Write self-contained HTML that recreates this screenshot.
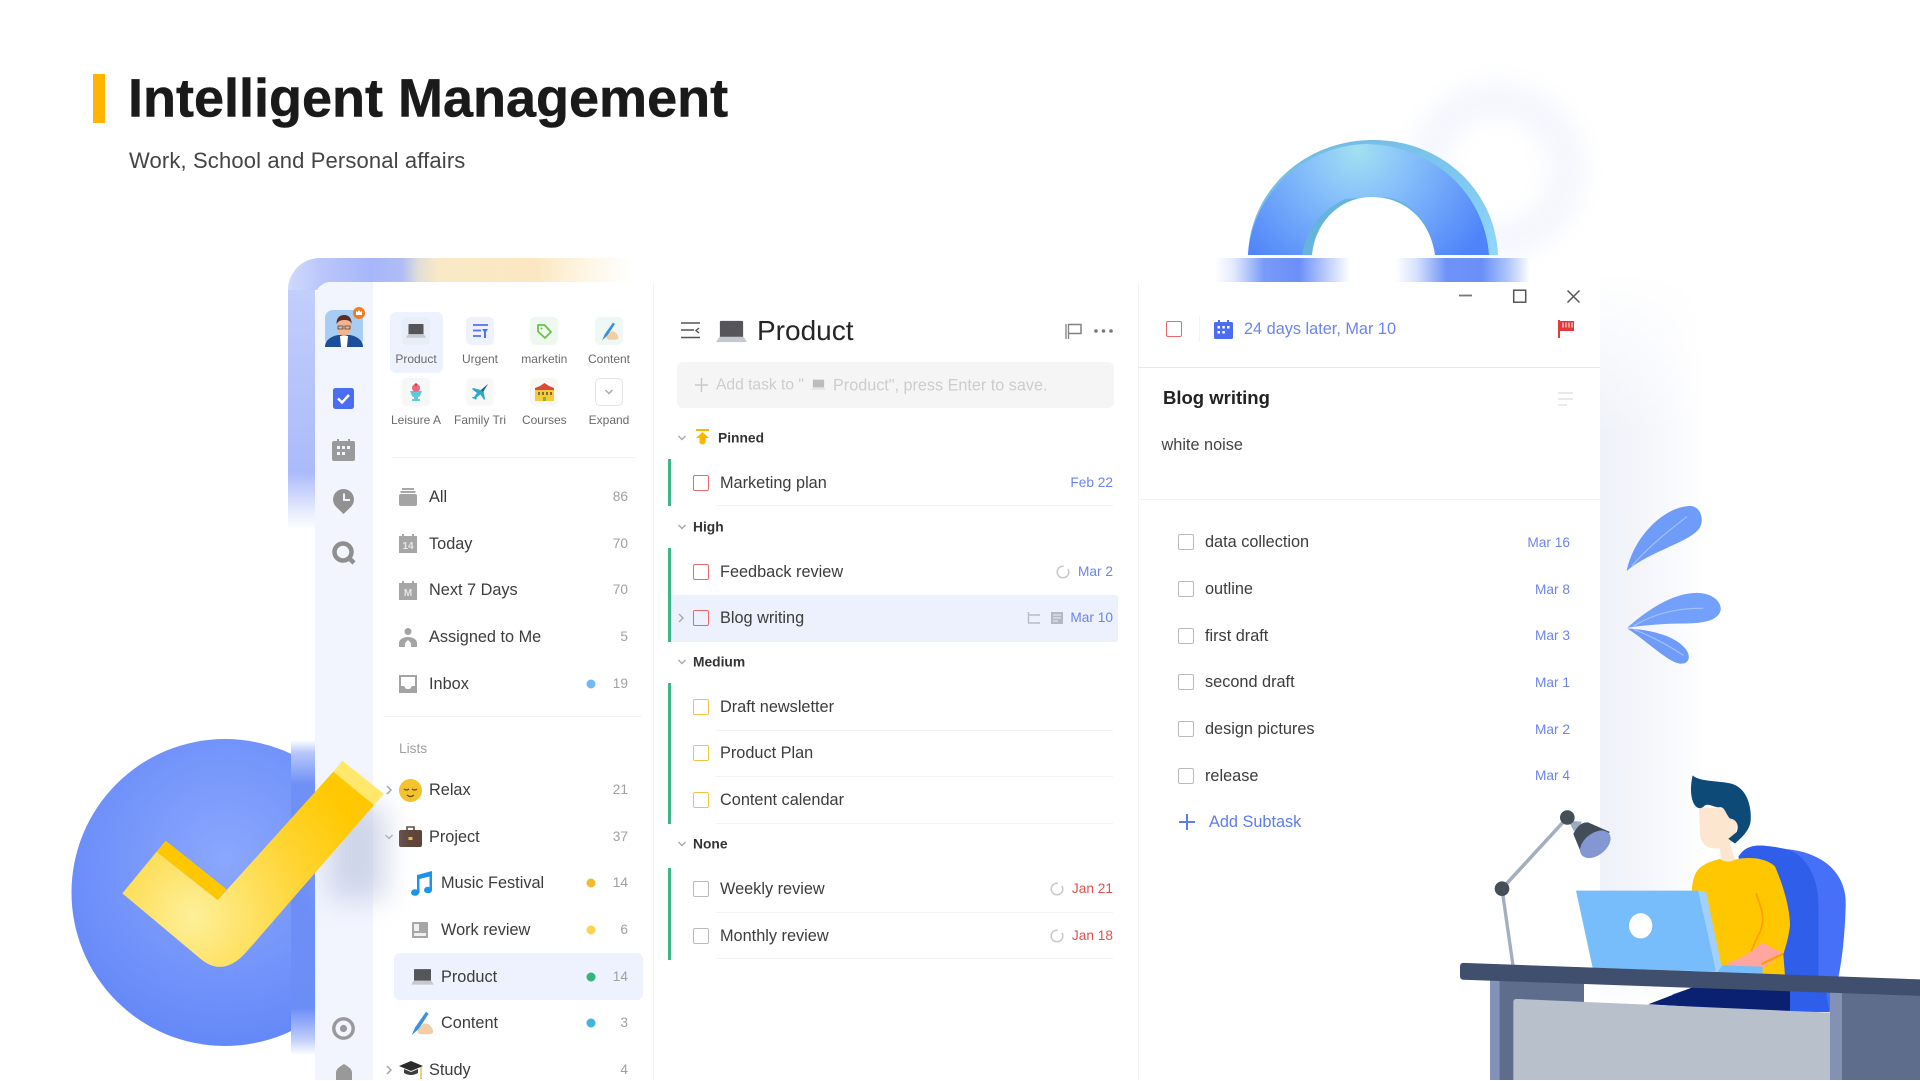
<!DOCTYPE html>
<html lang="en"><head><meta charset="utf-8"><title>Intelligent Management</title>
<style>
html,body{margin:0;padding:0;background:#fff}
body{width:1920px;height:1080px;overflow:hidden;position:relative;font-family:"Liberation Sans",sans-serif}
.a{position:absolute}
.t{position:absolute;white-space:nowrap;line-height:1.2;transform:translateY(calc(-50% + 1px));color:#3c3c3c;font-size:16.3px}
.c{position:absolute;white-space:nowrap;line-height:1.2;transform:translateY(-50%);color:#a0a0a0;font-size:13.7px;text-align:right}
.l{position:absolute;white-space:nowrap;line-height:1.2;transform:translate(-50%,-50%);color:#6a6a6a;font-size:12px}
.h{position:absolute;white-space:nowrap;line-height:1.2;transform:translateY(calc(-50% + 1px));color:#333;font-size:13.8px;font-weight:700}
.d{position:absolute;white-space:nowrap;line-height:1.2;transform:translateY(-50%);color:#6b84ee;font-size:13.7px;text-align:right}
.dot{position:absolute;width:9px;height:9px;border-radius:50%;transform:translate(-50%,-50%)}
.cb{position:absolute;width:14px;height:14px;border:1.8px solid #e8696b;border-radius:2px;transform:translateY(-50%)}
.y{border-color:#f0c544}.g{border-color:#b9b9b9}
.sep{position:absolute;height:1px;background:#f3f3f3}
.bar{position:absolute;left:667.5px;width:3.5px;background:#3fb68a}
.tile{position:absolute;width:28px;height:28px;border-radius:5px;transform:translate(-50%,-50%)}
svg{position:absolute;overflow:visible}
</style></head><body>
<svg width="0" height="0" style="left:0;top:0"><defs>
<symbol id="lap" viewBox="0 0 32 24"><path d="M5 1.500h22a1 1 0 0 1 1 1V18H4V2.500a1 1 0 0 1 1-1z" fill="#55555a"/><path d="M3.500 18h25L32 23.500H0z" fill="#c6c9cf"/></symbol>
<symbol id="chev" viewBox="0 0 10 10"><path d="M1.500 3l3.500 3.500L8.500 3" fill="none" stroke="#a8a8a8" stroke-width="1.400"/></symbol>
<symbol id="hand" viewBox="0 0 28 28"><path d="M3 27l4-9L19 1l3 2-11 17z" fill="#3d8fe0"/><path d="M10 21c3-4 6-8 10-7 3 1 7 5 7 9 0 3-3 3-6 3H13c-2 0-4-2-3-5z" fill="#f2cfa2"/></symbol>
</defs></svg>

<!-- soft decorations -->
<svg style="left:1380px;top:60px" width="280" height="220" viewBox="0 0 280 220"><circle cx="117" cy="110" r="70" fill="none" stroke="#f5f7fe" stroke-width="38" style="filter:blur(10px)"/></svg>
<svg style="left:1230px;top:130px" width="290" height="130" viewBox="1230 130 290 130">
<defs>
<radialGradient id="arcG" gradientUnits="userSpaceOnUse" cx="1358" cy="150" r="150"><stop offset="0" stop-color="#a2e0f2"/><stop offset=".35" stop-color="#87c0fa"/><stop offset="1" stop-color="#4e83fa"/></radialGradient>
<linearGradient id="rimG" x1="0" y1="0" x2="1" y2="1"><stop offset="0" stop-color="#6fb8e2"/><stop offset=".6" stop-color="#7fc8ee"/><stop offset="1" stop-color="#93d6fb"/></linearGradient>
</defs>
<path d="M1248 255C1250 190 1305 140 1373 140C1442 140 1495 190 1498 255Z" fill="url(#rimG)"/>
<path d="M1248 255C1252 190 1310 144 1368 144C1430 146 1484 190 1489 255Z" fill="url(#arcG)"/>
<path d="M1302 255C1306 232 1318 212 1345 199L1380 197C1410 197 1430 222 1435 255Z" fill="#65b4dd"/>
<path d="M1312 255C1315 222 1340 197 1372 197C1405 197 1430 220 1435 255Z" fill="#fff"/>
<rect x="1435" y="200" width="0" height="0"/>
</svg>
<div class="a" style="left:1600px;top:270px;width:105px;height:740px;background:linear-gradient(90deg,#eff2f9 0,#f3f5fb 35%,#f8f9fd 65%,#fff 100%);-webkit-mask-image:linear-gradient(180deg,transparent 0,#000 22%,#000 90%,transparent 100%);mask-image:linear-gradient(180deg,transparent 0,#000 22%,#000 90%,transparent 100%)"></div>

<!-- title -->
<div class="a" style="left:93px;top:74px;width:11.500px;height:49px;background:#ffb400"></div>
<div class="t" style="left:128px;top:98px;font-size:54px;font-weight:700;color:#1a1a1a;-webkit-text-stroke:.5px #1a1a1a">Intelligent Management</div>
<div class="t" style="left:129px;top:160px;font-size:22px;color:#444;letter-spacing:.14px">Work, School and Personal affairs</div>

<!-- circle + strips -->
<svg style="left:60px;top:730px" width="228" height="330" viewBox="60 730 228 330"><defs><radialGradient id="cG" gradientUnits="userSpaceOnUse" cx="225" cy="860" r="180"><stop offset="0" stop-color="#8ba7fd"/><stop offset="1" stop-color="#6589f8"/></radialGradient></defs><circle cx="225" cy="892.500" r="153.500" fill="url(#cG)"/></svg>
<div class="a" style="left:291px;top:740px;width:24px;height:315px;background:linear-gradient(180deg,#fff 0,#b8c8fb 4%,#6f90f6 14%,#6b8df6 85%,#c0cdfb 95%,#fff 100%)"></div>
<div class="a" style="left:288px;top:258px;width:345px;height:32px;border-radius:32px 0 0 0;background:linear-gradient(90deg,#d0d9fc 0,#bac6fb 10%,#a6b6fa 24%,#afbcf6 33%,#e3dfd6 38%,#fae9c6 44%,#fbe8c2 72%,#fef7e8 88%,#fff 100%)"></div>
<div class="a" style="left:288px;top:290px;width:27px;height:240px;background:linear-gradient(180deg,#c2cefb 0,#b3c1fb 50%,#abbafa 76%,#e6ebfe 92%,#fff 100%)"></div>
<div class="a" style="left:1215px;top:258px;width:135px;height:24px;background:linear-gradient(90deg,#fff 0,#e3e9fe 14%,#7a9bf9 36%,#6a8ff8 62%,#c5d4fc 85%,#fff 100%)"></div>
<div class="a" style="left:1395px;top:258px;width:135px;height:24px;background:linear-gradient(90deg,#fff 0,#d7e1fd 16%,#6f93f8 38%,#6a8ff8 64%,#b3cafb 85%,#fff 100%)"></div>

<!-- window -->
<div class="a" style="left:315px;top:282px;width:1285px;height:798px;background:#fff;border-radius:16px 0 0 0"></div>
<div class="a" id="app" style="left:0;top:0;width:1920px;height:1080px;filter:blur(.35px)">
<div class="a" style="left:315px;top:282px;width:58px;height:798px;background:#f2f5fe;border-radius:16px 0 0 0"></div>
<div class="a" style="left:653px;top:282px;width:1px;height:798px;background:#f5f5f5"></div>
<div class="a" style="left:1138px;top:282px;width:1px;height:798px;background:#f5f5f5"></div>

<!-- rail -->
<svg style="left:325px;top:310px" width="38" height="37" viewBox="0 0 38 37"><rect width="38" height="37" rx="8" fill="#a7cdf5"/><path d="M0 37c0-8 8-11 13-12h12c5 1 13 4 13 12z" fill="#1d4e9a"/><path d="M15 26h8l-1 11h-6z" fill="#fff"/><ellipse cx="19" cy="17" rx="7" ry="9" fill="#f2b48f"/><path d="M11.500 14c0-7 4-9 8-9s7.500 3 7 9c-1-3-3-4-7-4s-6 1-8 4z" fill="#5a2e24"/><path d="M13 16h5v3h-5zM20 16h5v3h-5z" fill="none" stroke="#444" stroke-width=".8"/></svg>
<div class="a" style="left:353px;top:307px;width:12px;height:12px;border-radius:50%;background:#f47c20"></div>
<svg style="left:356px;top:310px" width="6" height="5" viewBox="0 0 6 5"><path d="M0 1l1.500 1L3 0l1.500 2L6 1v4H0z" fill="#fff"/></svg>
<svg style="left:333px;top:388px" width="21" height="21" viewBox="0 0 21 21"><rect width="21" height="21" rx="2.500" fill="#4a6df2"/><path d="M5 10.500l4 4 7-7.500" fill="none" stroke="#fff" stroke-width="2.400"/></svg>
<svg style="left:332px;top:439px" width="23" height="22" viewBox="0 0 23 22"><path d="M5 0h2v2h9V0h2v2h3a2 2 0 0 1 2 2v16a2 2 0 0 1-2 2H2a2 2 0 0 1-2-2V4a2 2 0 0 1 2-2h3z" fill="#9a9a9a"/><g fill="#f2f5fe"><rect x="5" y="7" width="3" height="3"/><rect x="10" y="7" width="3" height="3"/><rect x="15" y="7" width="3" height="3"/><rect x="5" y="13" width="3" height="3"/><rect x="10" y="13" width="3" height="3"/></g></svg>
<svg style="left:333px;top:489px" width="21" height="25" viewBox="0 0 21 25"><path d="M10.500 0a10.500 10.500 0 0 1 7.500 17.800L10.500 25 3 17.800A10.500 10.500 0 0 1 10.500 0z" fill="#919191"/><path d="M11 4.500v6.500h6" fill="none" stroke="#f2f5fe" stroke-width="2"/></svg>
<svg style="left:332px;top:541px" width="24" height="24" viewBox="0 0 24 24"><circle cx="11" cy="11" r="8.500" fill="none" stroke="#8f8f8f" stroke-width="4.500"/><path d="M17 17l5 5" stroke="#8f8f8f" stroke-width="4.500"/></svg>
<svg style="left:332px;top:1017px" width="23" height="23" viewBox="0 0 23 23"><circle cx="11.500" cy="11.500" r="9.700" fill="none" stroke="#999" stroke-width="3.400"/><circle cx="11.500" cy="11.500" r="3.600" fill="#999"/></svg>
<svg style="left:336px;top:1064px" width="16" height="16" viewBox="0 0 16 16"><path d="M0 16V9c0-4 3-6 8-9 5 3 8 5 8 9v7z" fill="#999"/></svg>

<!-- quick tiles -->
<div class="a" style="left:390px;top:312px;width:53px;height:61px;border-radius:6px;background:#eef2fe"></div>
<div class="tile" style="left:416px;top:331px;background:#e7eef7"></div>
<svg style="left:406px;top:323px" width="20" height="15"><use href="#lap" width="20" height="15"/></svg>
<div class="tile" style="left:480px;top:331px;background:#eef1ff"></div>
<svg style="left:473px;top:324px" width="15" height="14" viewBox="0 0 15 14"><path d="M0 1h15M0 6.500h8M0 12h8" stroke="#4f72f0" stroke-width="1.800"/><path d="M9 5h6l-2 3v6h-2V8z" fill="#4f72f0"/></svg>
<div class="tile" style="left:544.300px;top:331px;background:#eff8ee"></div>
<svg style="left:537px;top:324px" width="15" height="15" viewBox="0 0 15 15"><path d="M1 1h6.500l6.500 7-6 6-7-6.500z" fill="none" stroke="#6cc04e" stroke-width="1.800" stroke-linejoin="round"/><circle cx="4.500" cy="4.500" r="1" fill="#6cc04e"/></svg>
<div class="tile" style="left:609px;top:331px;background:#eef8f4"></div>
<svg style="left:600px;top:322px" width="19" height="19"><use href="#hand" width="19" height="19"/></svg>
<div class="l" style="left:416px;top:359px">Product</div><div class="l" style="left:480px;top:359px">Urgent</div><div class="l" style="left:544.300px;top:359px">marketin</div><div class="l" style="left:609px;top:359px">Content</div>
<div class="tile" style="left:416px;top:392px;background:#f4f8f6"></div>
<svg style="left:407px;top:383px" width="18" height="19" viewBox="0 0 18 19"><path d="M3 8h12l-2 5c-1 1.500-7 1.500-8 0z" fill="#62c6dd"/><path d="M7 14h4v2h2v2H5v-2h2z" fill="#62c6dd"/><circle cx="9" cy="5" r="4" fill="#f0667a"/><circle cx="9" cy="1.500" r="1.300" fill="#d9314e"/></svg>
<div class="tile" style="left:480px;top:392px;background:#f8f9f6"></div>
<svg style="left:472px;top:384px" width="16" height="16" viewBox="0 0 16 16"><path d="M16 0L9 6 1 4 0 5l5 4-3 4-1.500 0L0 14l3 1 1 1 .5-1 0-1.500 4-3 3.500 5.500 1-1-1.500-8z" fill="#2ea7c9"/><path d="M16 0L9 6l2 2z" fill="#1c5e80"/></svg>
<div class="tile" style="left:544.300px;top:392px;background:#f8f8f5"></div>
<svg style="left:535px;top:383px" width="19" height="18" viewBox="0 0 19 18"><rect y="5" width="19" height="13" fill="#f4cb3d"/><path d="M0 5l5-2 4.500-3 4.500 3 5 2v2H0z" fill="#d94a3c"/><g fill="#8a6a2c"><rect x="3" y="9" width="2" height="3"/><rect x="7" y="9" width="2" height="3"/><rect x="11" y="9" width="2" height="3"/><rect x="15" y="9" width="2" height="3"/></g><rect x="8" y="14" width="3" height="4" fill="#78b843"/></svg>
<div class="a" style="left:595px;top:378px;width:26px;height:26px;border:1px solid #e4e4e4;border-radius:5px;background:#fff"></div>
<svg style="left:604px;top:387px" width="10" height="10"><use href="#chev" width="10" height="10"/></svg>
<div class="l" style="left:416px;top:420px">Leisure A</div><div class="l" style="left:480px;top:420px">Family Tri</div><div class="l" style="left:544.300px;top:420px">Courses</div><div class="l" style="left:609px;top:420px">Expand</div>
<div class="sep" style="left:392px;top:457px;width:244px"></div>

<!-- smart lists -->
<svg style="left:399px;top:488px" width="18" height="18" viewBox="0 0 18 18"><path d="M3 0h12v2H3zM1.500 3h15v2h-15z" fill="#a8a8a8"/><rect y="6" width="18" height="12" rx="2" fill="#a4a4a4"/></svg>
<svg style="left:399px;top:534px" width="18" height="19" viewBox="0 0 18 19"><path d="M3 0h2v2h8V0h2v2h3v17H0V2h3z" fill="#a6a6a6"/><text x="9" y="15" font-size="10" font-weight="700" fill="#e6e6e6" text-anchor="middle" font-family="Liberation Sans">14</text></svg>
<svg style="left:399px;top:581px" width="18" height="19" viewBox="0 0 18 19"><path d="M3 0h2v2h8V0h2v2h3v17H0V2h3z" fill="#a6a6a6"/><text x="9" y="15" font-size="10" font-weight="700" fill="#e6e6e6" text-anchor="middle" font-family="Liberation Sans">M</text></svg>
<svg style="left:399px;top:628px" width="18" height="19" viewBox="0 0 18 19"><circle cx="9" cy="3.500" r="3.500" fill="#a4a4a4"/><path d="M0 19v-4c0-4 5-6 9-6s9 2 9 6v4h-6v-4l-3-3-3 3v4z" fill="#a4a4a4"/></svg>
<svg style="left:399px;top:675px" width="18" height="18" viewBox="0 0 18 18"><rect width="18" height="18" fill="#a4a4a4"/><path d="M2 2h14v9h-3l-2 3H7l-2-3H2z" fill="#fff"/></svg>
<div class="t" style="left:429px;top:497px">All</div><div class="t" style="left:429px;top:543.500px">Today</div><div class="t" style="left:429px;top:590px">Next 7 Days</div><div class="t" style="left:429px;top:637px">Assigned to Me</div><div class="t" style="left:429px;top:683.500px">Inbox</div>
<div class="c" style="right:1292px;top:497px">86</div><div class="c" style="right:1292px;top:543.500px">70</div><div class="c" style="right:1292px;top:590px">70</div><div class="c" style="right:1292px;top:637px">5</div><div class="c" style="right:1292px;top:683.500px">19</div>
<div class="dot" style="left:591px;top:683.500px;background:#74b8f2"></div>
<div class="sep" style="left:384px;top:716px;width:258px"></div>
<div class="t" style="left:399px;top:748px;font-size:13.700px;color:#a0a0a0">Lists</div>

<div class="a" style="left:394px;top:953px;width:249px;height:47px;border-radius:6px;background:#eef2fe"></div>
<svg style="left:385px;top:785px" width="9" height="10" viewBox="0 0 9 10"><path d="M2 1l4 4-4 4" fill="none" stroke="#a0a0a0" stroke-width="1.400"/></svg>
<svg style="left:385px;top:1065px" width="9" height="10" viewBox="0 0 9 10"><path d="M2 1l4 4-4 4" fill="none" stroke="#a0a0a0" stroke-width="1.400"/></svg>
<svg style="left:384px;top:832px" width="10" height="10"><use href="#chev" width="10" height="10"/></svg>
<svg style="left:399px;top:779px" width="23" height="23" viewBox="0 0 23 23"><circle cx="11.500" cy="11.500" r="11.500" fill="#f4c22b"/><path d="M5 10q2.500 2 5 0M13 10q2.500 2 5 0M8 16q3.500 3 7 0" fill="none" stroke="#6a4a14" stroke-width="1.300"/></svg>
<svg style="left:399px;top:826px" width="23" height="21" viewBox="0 0 23 21"><path d="M8 4V1h7v3" fill="none" stroke="#5c4a40" stroke-width="1.600"/><rect y="4" width="23" height="17" rx="2" fill="#5e4439"/><rect x="9.500" y="11" width="4" height="3" fill="#f2b838"/></svg>
<svg style="left:411px;top:871px" width="21" height="25" viewBox="0 0 21 25"><path d="M6 4L21 0v19h-2.500V5.500L8.500 8v14H6z" fill="#1e93e8"/><ellipse cx="4" cy="21.500" rx="4" ry="3.300" fill="#1e93e8"/><ellipse cx="17" cy="19" rx="4" ry="3.300" fill="#1e93e8"/></svg>
<svg style="left:412px;top:922px" width="16" height="16" viewBox="0 0 16 16"><rect width="16" height="16" rx="1" fill="#a6a6a6"/><rect x="2" y="2" width="5" height="7" fill="#efefef"/><rect x="2" y="11" width="12" height="3" fill="#efefef"/></svg>
<svg style="left:411px;top:968px" width="23" height="17"><use href="#lap" width="23" height="17"/></svg>
<svg style="left:409px;top:1011px" width="25" height="25"><use href="#hand" width="25" height="25"/></svg>
<svg style="left:399px;top:1061px" width="24" height="18" viewBox="0 0 24 18"><path d="M0 5l12-5 12 5-12 5z" fill="#2b2b2b"/><path d="M5 8v4q7 4 14 0V8l-7 3z" fill="#3d3d3d"/><path d="M22 6v12" stroke="#e8b33a" stroke-width="1.300"/></svg>
<div class="t" style="left:429px;top:790px">Relax</div><div class="t" style="left:429px;top:836.700px">Project</div><div class="t" style="left:441px;top:883px">Music Festival</div><div class="t" style="left:441px;top:930px">Work review</div><div class="t" style="left:441px;top:977px">Product</div><div class="t" style="left:441px;top:1023px">Content</div><div class="t" style="left:429px;top:1070px">Study</div>
<div class="c" style="right:1292px;top:790px">21</div><div class="c" style="right:1292px;top:836.700px">37</div><div class="c" style="right:1292px;top:883px">14</div><div class="c" style="right:1292px;top:930px">6</div><div class="c" style="right:1292px;top:977px">14</div><div class="c" style="right:1292px;top:1023px">3</div><div class="c" style="right:1292px;top:1070px">4</div>
<div class="dot" style="left:591px;top:883px;background:#f0bb2e"></div><div class="dot" style="left:591px;top:930px;background:#ffd34f"></div><div class="dot" style="left:591px;top:977px;background:#2eb67d"></div><div class="dot" style="left:591px;top:1023px;background:#3fb4dc"></div>

<!-- middle -->
<svg style="left:681px;top:322px" width="19" height="17" viewBox="0 0 19 17"><path d="M0 1h19M0 8h13M0 15.500h19" stroke="#555" stroke-width="1.400" fill="none"/><path d="M18 6l-3 2.500 3 2.500" fill="none" stroke="#555" stroke-width="1.400"/></svg>
<svg style="left:716px;top:319px" width="31" height="24"><use href="#lap" width="31" height="24"/></svg>
<div class="t" style="left:757px;top:330px;font-size:28px;color:#262626">Product</div>
<svg style="left:1065px;top:323px" width="17" height="16" viewBox="0 0 17 16"><path d="M1 1v15M3.500 1v15" stroke="#808080" stroke-width="1.300"/><path d="M3.500 1.500H16v9H3.500" fill="none" stroke="#808080" stroke-width="1.500"/></svg>
<svg style="left:1094px;top:329px" width="19" height="4" viewBox="0 0 19 4"><circle cx="2" cy="2" r="1.800" fill="#777"/><circle cx="9.500" cy="2" r="1.800" fill="#777"/><circle cx="17" cy="2" r="1.800" fill="#777"/></svg>
<div class="a" style="left:677px;top:362px;width:437px;height:46px;border-radius:6px;background:#f5f5f5"></div>
<svg style="left:695px;top:378px" width="13" height="14" viewBox="0 0 13 14"><path d="M6.500 0v14M0 7h13" stroke="#c8c8c8" stroke-width="1.500"/></svg>
<div class="t" style="left:716px;top:385px;font-size:15.600px;color:#cdcdcd">Add task to "</div>
<svg style="left:811px;top:378px" width="15" height="13" viewBox="0 0 32 24" opacity=".35"><use href="#lap" width="32" height="24"/></svg>
<div class="t" style="left:833px;top:385px;font-size:16.200px;color:#cdcdcd">Product", press Enter to save.</div>

<svg style="left:677px;top:433px" width="10" height="10"><use href="#chev" width="10" height="10"/></svg>
<svg style="left:696px;top:429px" width="13" height="16" viewBox="0 0 13 16"><rect width="13" height="2" fill="#ffb400"/><path d="M6.500 3L13 9H9.500v5q-3 3-6 0V9H0z" fill="#ffb400"/></svg>
<div class="h" style="left:718px;top:438px">Pinned</div>
<div class="bar" style="top:459px;height:47px"></div>
<div class="cb" style="left:693px;top:483px"></div><div class="t" style="left:720px;top:483px">Marketing plan</div><div class="d" style="right:807px;top:483px">Feb 22</div>
<div class="sep" style="left:716px;top:505px;width:397px"></div>

<svg style="left:677px;top:522px" width="10" height="10"><use href="#chev" width="10" height="10"/></svg>
<div class="h" style="left:693px;top:527px">High</div>
<div class="a" style="left:671px;top:595px;width:447px;height:46.500px;background:#ecf1fd;border-radius:0 3px 3px 0"></div>
<div class="bar" style="top:548px;height:94px"></div>
<div class="cb" style="left:693px;top:571.500px"></div><div class="t" style="left:720px;top:571.500px">Feedback review</div>
<svg style="left:1056px;top:565px" width="14" height="14" viewBox="0 0 14 14"><circle cx="7" cy="7" r="5.800" fill="none" stroke="#c8c8c8" stroke-width="1.500" stroke-dasharray="28 5"/></svg>
<div class="d" style="right:807px;top:572px">Mar 2</div>
<svg style="left:677px;top:613px" width="9" height="10" viewBox="0 0 9 10"><path d="M2 1l4 4-4 4" fill="none" stroke="#a8a8b0" stroke-width="1.400"/></svg>
<div class="cb" style="left:693px;top:618px"></div><div class="t" style="left:720px;top:618px">Blog writing</div>
<svg style="left:1027px;top:612px" width="13" height="12" viewBox="0 0 13 12"><path d="M1.500 0v11.500M1.500 3h11M1.500 11h11M12 2v2M12 10v2" fill="none" stroke="#b9bdc8" stroke-width="1.400"/></svg>
<svg style="left:1051px;top:612px" width="12" height="12" viewBox="0 0 12 12"><rect width="12" height="12" fill="#b4b8c4"/><path d="M2 3h8M2 6h8M2 9h5" stroke="#ecf1fd" stroke-width="1"/></svg>
<div class="d" style="right:807px;top:618px">Mar 10</div>

<svg style="left:677px;top:657px" width="10" height="10"><use href="#chev" width="10" height="10"/></svg>
<div class="h" style="left:693px;top:662px">Medium</div>
<div class="bar" style="top:683px;height:141px"></div>
<div class="cb y" style="left:693px;top:706.500px"></div><div class="t" style="left:720px;top:706.500px">Draft newsletter</div><div class="sep" style="left:716px;top:729.500px;width:397px"></div>
<div class="cb y" style="left:693px;top:753px"></div><div class="t" style="left:720px;top:753px">Product Plan</div><div class="sep" style="left:716px;top:776px;width:397px"></div>
<div class="cb y" style="left:693px;top:800px"></div><div class="t" style="left:720px;top:800px">Content calendar</div><div class="sep" style="left:716px;top:823px;width:397px"></div>

<svg style="left:677px;top:839px" width="10" height="10"><use href="#chev" width="10" height="10"/></svg>
<div class="h" style="left:693px;top:844px">None</div>
<div class="bar" style="top:868px;height:92px"></div>
<div class="cb g" style="left:693px;top:889px"></div><div class="t" style="left:720px;top:889px">Weekly review</div>
<svg style="left:1050px;top:882px" width="14" height="14" viewBox="0 0 14 14"><circle cx="7" cy="7" r="5.800" fill="none" stroke="#c8c8c8" stroke-width="1.500" stroke-dasharray="28 5"/></svg>
<div class="d" style="right:807px;top:889px;color:#e0504f">Jan 21</div><div class="sep" style="left:716px;top:912px;width:397px"></div>
<div class="cb g" style="left:693px;top:935.500px"></div><div class="t" style="left:720px;top:935.500px">Monthly review</div>
<svg style="left:1050px;top:929px" width="14" height="14" viewBox="0 0 14 14"><circle cx="7" cy="7" r="5.800" fill="none" stroke="#c8c8c8" stroke-width="1.500" stroke-dasharray="28 5"/></svg>
<div class="d" style="right:807px;top:935.500px;color:#e0504f">Jan 18</div><div class="sep" style="left:716px;top:958px;width:397px"></div>

<!-- right -->
<svg style="left:1459px;top:289px" width="122" height="15" viewBox="0 0 122 15"><path d="M0 6.500h13" stroke="#777" stroke-width="1.800"/><rect x="54.700" y="1.200" width="12" height="12" fill="none" stroke="#555" stroke-width="1.500"/><path d="M108.500 1.500l12 12M120.500 1.500l-12 12" stroke="#555" stroke-width="1.500"/></svg>
<div class="cb" style="left:1166px;top:329px"></div>
<div class="a" style="left:1199px;top:316px;width:1px;height:26px;background:#f4f4f4"></div>
<svg style="left:1214px;top:320px" width="19" height="19" viewBox="0 0 19 19"><path d="M4 0h2v2h7V0h2v2h2.500A1.500 1.500 0 0 1 19 3.500v14a1.500 1.500 0 0 1-1.500 1.500h-16A1.500 1.500 0 0 1 0 17.500v-14A1.500 1.500 0 0 1 1.500 2H4z" fill="#4a6df2"/><g fill="#fff"><rect x="3.500" y="6" width="2.500" height="2.500"/><rect x="8.300" y="6" width="2.500" height="2.500"/><rect x="13" y="6" width="2.500" height="2.500"/><rect x="3.500" y="11" width="2.500" height="2.500"/><rect x="8.300" y="11" width="2.500" height="2.500"/></g></svg>
<div class="t" style="left:1244px;top:329px;color:#6b84ee">24 days later, Mar 10</div>
<svg style="left:1558px;top:320px" width="16" height="18" viewBox="0 0 16 18"><path d="M0 0h2v18H0z" fill="#e03a3e"/><path d="M2 1h14v10H2z" fill="#e03a3e"/><path d="M5 2.500v5M8 2.500v5M11 2.500v5M14 2.500v5" stroke="#fff" stroke-width="1"/></svg>
<div class="a" style="left:1138px;top:366.500px;width:462px;height:1px;background:#e8e8e8"></div>
<div class="t" style="left:1163px;top:397px;font-size:18.500px;font-weight:700;color:#222">Blog writing</div>
<svg style="left:1558px;top:392px" width="15" height="14" viewBox="0 0 15 14"><path d="M0 1h15M0 7h15M0 13h9" stroke="#dedede" stroke-width="1.300"/></svg>
<div class="t" style="left:1161.500px;top:445px;color:#444">white noise</div>
<div class="a" style="left:1138px;top:499px;width:462px;height:1px;background:#f3f3f3"></div>
<div class="cb g" style="left:1178px;top:542px"></div><div class="t" style="left:1205px;top:542px">data collection</div><div class="d" style="right:350px;top:542.500px">Mar 16</div>
<div class="cb g" style="left:1178px;top:589px"></div><div class="t" style="left:1205px;top:589px">outline</div><div class="d" style="right:350px;top:589.500px">Mar 8</div>
<div class="cb g" style="left:1178px;top:635.500px"></div><div class="t" style="left:1205px;top:635.500px">first draft</div><div class="d" style="right:350px;top:636px">Mar 3</div>
<div class="cb g" style="left:1178px;top:682px"></div><div class="t" style="left:1205px;top:682px">second draft</div><div class="d" style="right:350px;top:682.500px">Mar 1</div>
<div class="cb g" style="left:1178px;top:729px"></div><div class="t" style="left:1205px;top:729px">design pictures</div><div class="d" style="right:350px;top:729.500px">Mar 2</div>
<div class="cb g" style="left:1178px;top:775.500px"></div><div class="t" style="left:1205px;top:775.500px">release</div><div class="d" style="right:350px;top:776px">Mar 4</div>
<svg style="left:1179px;top:814px" width="16" height="16" viewBox="0 0 16 16"><path d="M8 0v16M0 8h16" stroke="#5b7ee8" stroke-width="2"/></svg>
<div class="t" style="left:1209px;top:822px;color:#5b7ee8">Add Subtask</div>
</div>

<!-- check mark -->
<div class="a" style="left:328px;top:805px;width:58px;height:95px;background:#c3cbe3;filter:blur(14px);opacity:.75"></div>
<svg style="left:50px;top:720px" width="360" height="360" viewBox="0 0 1080 1080">
<defs><radialGradient id="kG" gradientUnits="userSpaceOnUse" cx="430" cy="590" r="560"><stop offset="0" stop-color="#fdf09a"/><stop offset=".28" stop-color="#fee36a"/><stop offset=".6" stop-color="#ffd535"/><stop offset="1" stop-color="#ffc800"/></radialGradient></defs>
<path d="M217 520L320 395L503 540L850 155L972 255L590 695Q520 775 450 715Z" fill="url(#kG)"/>
<path d="M320 395L347 362L530 508L503 540Z" fill="#ffc700"/>
<path d="M850 155L877 122L1002 222L972 255Z" fill="#ffe86b"/>
</svg>

<!-- illustration -->
<svg style="left:1400px;top:480px" width="520" height="600" viewBox="0 0 1560 1568" preserveAspectRatio="none">
<path d="M680 238C700 150 790 70 870 68C905 68 915 110 895 130C860 165 740 190 680 238Z" fill="#6f9cf8"/>
<path d="M695 225C750 170 810 130 862 95" fill="none" stroke="#a5c3fb" stroke-width="3"/>
<path d="M682 386C740 340 820 295 890 295C940 295 965 320 962 340C955 370 900 375 850 375C790 375 730 380 682 386Z" fill="#73a0fa"/>
<path d="M700 382C770 345 840 335 910 335" fill="none" stroke="#a5c3fb" stroke-width="3"/>
<path d="M682 388C730 390 810 400 850 435C875 455 870 480 845 480C810 482 740 420 682 388Z" fill="#6f9cf8"/>
<path d="M700 390C760 410 810 435 850 458" fill="none" stroke="#a5c3fb" stroke-width="3"/>
<!-- lamp -->
<path d="M306 1068L502 882" stroke="#a3afbe" stroke-width="10"/><path d="M306 1068L340 1275" stroke="#a3afbe" stroke-width="10"/>
<path d="M505 890L545 893L532 925L520 915Z" fill="#9badc0"/>
<path d="M565 895C540 893 528 912 520 925L545 978L630 920Z" fill="#414e5a"/>
<ellipse cx="586" cy="952" rx="50" ry="30" transform="rotate(-30 586 952)" fill="#8497d3"/>
<ellipse cx="306" cy="1068" rx="22" ry="19" fill="#454f58"/><ellipse cx="502" cy="882" rx="22" ry="19" fill="#454f58"/>
<!-- chair -->
<path d="M1015 985C1040 950 1075 950 1160 965C1240 970 1340 1010 1337 1110C1335 1190 1325 1260 1315 1300L1290 1390H1170V1300L1100 1000Z" fill="#4570f7"/>
<path d="M1015 985C1040 950 1075 950 1160 965C1220 980 1255 1040 1255 1110V1300H1150Z" fill="#2e5eea"/>
<path d="M1170 1320H1276L1288 1390H1170Z" fill="#2e5eea"/>
<!-- legs -->
<path d="M815 1345L885 1325L890 1345Z" fill="#2e5eea"/>
<path d="M745 1370L880 1325L1170 1330V1392Z" fill="#0a2070"/>
<!-- person -->
<path d="M897 855L1010 860C1015 920 1000 945 990 950L1005 995C990 1000 970 995 962 990L960 962C940 965 910 965 900 930Z" fill="#fde6d0"/>
<path d="M878 772C900 790 960 785 1000 795C1045 810 1055 860 1052 890C1050 915 1025 935 1005 950L985 938L1010 920C1020 900 1005 885 990 885C975 870 975 855 960 855C945 858 930 845 915 850C905 860 895 858 890 855C870 840 870 800 878 772Z" fill="#0d4a78"/>
<path d="M875 1075C880 1020 895 1005 960 990C975 998 990 1000 1005 992C1040 985 1095 985 1125 1010C1150 1060 1170 1120 1170 1165C1165 1200 1155 1225 1150 1240L1155 1295L960 1290L900 1075Z" fill="#ffc700"/>
<path d="M1068 1080C1085 1120 1100 1150 1075 1190C1060 1215 1055 1230 1050 1240" fill="none" stroke="#ff9d00" stroke-width="5"/>
<path d="M985 1260C1030 1250 1065 1225 1085 1208L1150 1238L1090 1275L985 1270Z" fill="#ffa6a0"/>
<path d="M1085 1265L1150 1238" stroke="#ff9d00" stroke-width="6"/>
<!-- laptop -->
<path d="M528 1073H895L950 1285L578 1275Z" fill="#77bdfc"/>
<path d="M895 1073L918 1075L968 1285L948 1285Z" fill="#a3cffc"/>
<path d="M968 1268L1088 1272V1292L950 1288Z" fill="#77bdfc"/>
<ellipse cx="722" cy="1165" rx="35" ry="33" fill="#fff"/>
<!-- desk -->
<rect x="270" y="1300" width="28" height="268" fill="#8393b8"/><rect x="298" y="1300" width="254" height="268" fill="#5e6d8b"/>
<rect x="1290" y="1335" width="36" height="233" fill="#8392b4"/><rect x="1326" y="1335" width="234" height="233" fill="#5e6d8b"/>
<path d="M340 1365Q340 1356 350 1356L1290 1392V1568H340Z" fill="#b8c0cc"/>
<path d="M180 1272Q180 1262 190 1262L1560 1305V1348L190 1306Q180 1306 180 1296Z" fill="#3f4f6d"/>
</svg>
</body></html>
